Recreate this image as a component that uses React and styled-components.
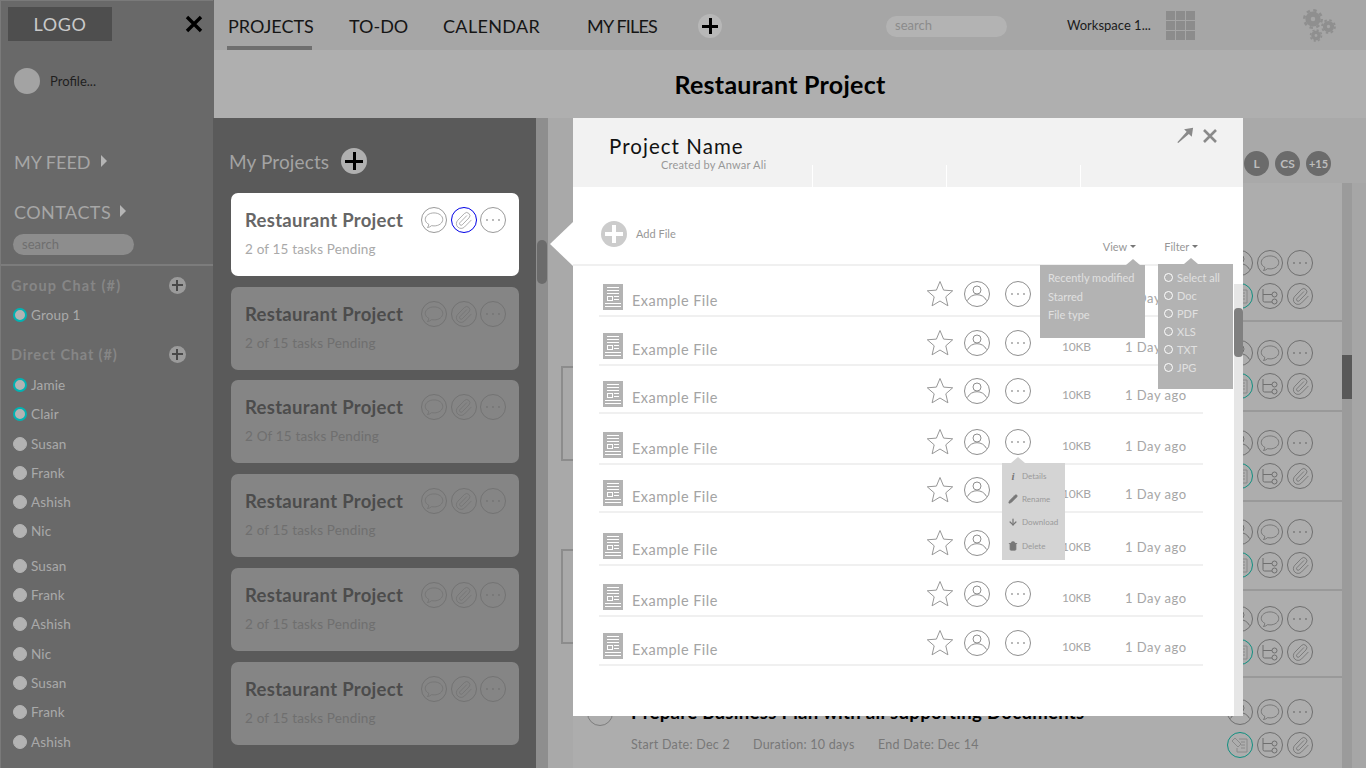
import React from "react";
import styled, { createGlobalStyle } from "styled-components";
import { Paperclip, Pencil, ArrowDown, Trash2 } from "lucide-react";

const Global = createGlobalStyle`
  html, body { margin: 0; padding: 0; height: 768px; overflow: hidden; background: #a9a9a9; }
  * { box-sizing: border-box; }
  body { font-family: Lato, "Open Sans", sans-serif; }
`;

const Page = styled.div`display: flex; width: 1366px; height: 768px; overflow: hidden;`;

/* ---------- sidebar ---------- */
const Sidebar = styled.aside`
  width: 213px; flex: none; background: #696969; border-left: 1px solid #7a7a7a; border-top: 1px solid #7a7a7a;
  display: flex; flex-direction: column;
`;
const LogoRow = styled.div`display: flex; align-items: center; justify-content: space-between; padding: 6px 10px 0 7px;`;
const Logo = styled.div`
  width: 104px; height: 34px; background: #4e4e4e; color: #c9c9c9; font-size: 18px; letter-spacing: .6px;
  display: flex; align-items: center; justify-content: center; margin-right: auto;
`;
const CloseGlyph = styled.svg`width: 18px; height: 18px; display: block;`;
const ProfileRow = styled.div`display: flex; align-items: center; gap: 10px; padding: 27px 0 0 13px;`;
const Avatar = styled.div`width: 26px; height: 26px; border-radius: 50%; background: #a3a3a3;`;
const ProfileName = styled.span`font-size: 13px; color: #1f1f1f;`;
const NavHead = styled.div`
  display: flex; align-items: center; gap: ${p => p.$gap}px; font-size: 18px; letter-spacing: ${p => p.$ls}px; color: #a6a6a6; height: 24px;
  margin: ${p => p.$top}px 0 0 13px;
`;
const Caret = styled.span`width: 0; height: 0; border-left: 6px solid #b5b5b5; border-top: 6px solid transparent; border-bottom: 6px solid transparent; margin-bottom: 2px;`;
const SideSearch = styled.div`
  width: 121px; height: 21px; margin: 10px 0 9px 12px; border-radius: 11px; background: #8d8d8d; color: #6f6f6f;
  font-size: 13px; padding: 1px 0 0 9px; line-height: 18px;
`;
const Rule = styled.div`height: 2px; background: #7c7c7c;`;
const GroupHead = styled.div`
  display: flex; align-items: center; justify-content: space-between; height: 20px; padding: 0 27px 0 10px;
  margin-top: ${p => p.$top}px; font-size: 14.5px; font-weight: 700; letter-spacing: ${p => p.$ls}px; color: #868686;
`;
const MiniPlus = styled.div`
  width: 17px; height: 17px; border-radius: 50%; background: #9b9b9b; position: relative;
  &::before, &::after { content: ""; position: absolute; background: #494949; }
  &::before { left: 3px; right: 3px; top: 7px; height: 2px; }
  &::after { top: 3px; bottom: 3px; left: 7px; width: 2px; }
`;
const Person = styled.div`
  display: flex; align-items: center; gap: 4px; height: 29.3px; padding-left: 12px; font-size: 13.5px; letter-spacing: .15px; color: #a9a9a9;
  margin-top: ${p => p.$gap || 0}px;
`;
const Dot = styled.span`
  width: 14px; height: 14px; border-radius: 50%; background: #b3b3b3; flex: none;
  border: ${p => p.$on ? "2px solid #00b3b3" : "1px solid #b3b3b3"};
`;

/* ---------- main ---------- */
const Main = styled.div`flex: 1; min-width: 0; display: flex; flex-direction: column; position: relative; background: #696969;`;
const TopBar = styled.header`height: 50px; flex: none; margin-left: 1px; background: #a6a6a6; display: flex; align-items: flex-start; padding-left: 13px;`;
const Tab = styled.div`
  height: 51px; width: ${p => p.$w}px; margin-right: ${p => p.$mr}px; font-size: 18px; color: #151515; padding: 15px 0 0 1px; letter-spacing: ${p => p.$ls || 0}px; line-height: 22px;
  border-bottom: ${p => p.$active ? "5px solid #6f6f6f" : "none"}; white-space: nowrap;
`;
const BigPlus = styled.div`
  width: ${p => p.$d}px; height: ${p => p.$d}px; border-radius: 50%; background: ${p => p.$bg}; position: relative; flex: none;
  margin-top: ${p => p.$mt || 0}px;
  &::before, &::after { content: ""; position: absolute; background: ${p => p.$fg}; }
  &::before { left: 4px; right: 4px; top: calc(50% - ${p => (p.$t || 3) / 2}px); height: ${p => p.$t || 3}px; }
  &::after { top: 4px; bottom: 4px; left: calc(50% - ${p => (p.$t || 3) / 2}px); width: ${p => p.$t || 3}px; }
`;
const TopSearch = styled.div`
  width: 121px; height: 21px; border-radius: 11px; background: #b3b3b3; color: #8b8b8b; font-size: 13px; line-height: 19px;
  padding-left: 9px; margin: 16px 0 0 164px;
`;
const Workspace = styled.div`font-size: 13px; color: #1c1c1c; margin: 17px 0 0 60px; width: 99px; white-space: nowrap;`;
const Waffle = styled.div`display: grid; grid-template-columns: repeat(3, 9px); grid-auto-rows: 9px; gap: 1px; margin-top: 11px; span { background: #8c8c8c; }`;
const GearBox = styled.svg`width: 33px; height: 33px; margin: 9px 0 0 108px; display: block; flex: none;`;
const TitleBar = styled.div`
  height: 68px; flex: none; margin-left: 1px; background: #afafaf; display: flex; align-items: center; justify-content: center;
  font-size: 25px; font-weight: 700; color: #000; padding-right: 20px; letter-spacing: .25px;
`;
const Body = styled.div`flex: 1; display: flex; min-height: 0; position: relative; background: #a9a9a9;`;

/* projects */
const Projects = styled.section`width: 323px; flex: none; background: #5a5a5a; padding: 29px 0 0 18px;`;
const ProjectsHead = styled.div`display: flex; align-items: center; gap: 12px; height: 28px; font-size: 19px; letter-spacing: .12px; color: #a3a3a3; margin-left: -2px;`;
const Cards = styled.div`display: flex; flex-direction: column; gap: 11px; margin-top: 18px;`;
const Card = styled.div`
  width: 288px; height: 83px; border-radius: 7px; background: ${p => p.$active ? "#fff" : "#858585"};
  padding: 14px 13px 0 14px; display: grid; grid-template-columns: 1fr auto; row-gap: 8px; align-content: start;
  &:nth-child(3) { margin-top: -1px; }
`;
const CardTitle = styled.div`font-size: 18.5px; font-weight: 700; letter-spacing: .3px; line-height: 26px; color: ${p => p.$active ? "#666" : "#4c4c4c"};`;
const CardIcons = styled.div`display: flex; gap: 3.5px;`;
const CardSub = styled.div`grid-column: 1 / 3; font-size: 13.5px; letter-spacing: .17px; line-height: 17px; color: ${p => p.$active ? "#a9a9a9" : "#6f6f6f"};`;
const Ring = styled.div`
  width: ${p => p.$d || 26}px; height: ${p => p.$d || 26}px; border-radius: 50%; flex: none; display: flex; align-items: center; justify-content: center;
  border: 1px solid ${p => p.$c}; color: ${p => p.$ic || p.$c};
  svg { display: block; }
`;
const Track = styled.div`width: 12px; flex: none; background: #8e8e8e; padding: 122px 1px 0;`;
const Thumb = styled.div`height: 44px; background: #6b6b6b; border-radius: 5px;`;
const Gutter = styled.div`width: 25px; flex: none; padding: 248px 0 0 13px; display: flex; flex-direction: column; gap: 88px;`;
const GutterBox = styled.div`height: 95px; border: 2px solid #8c8c8c; border-right: none;`;

/* tasks behind modal */
const Tasks = styled.div`flex: 1; min-width: 0; display: flex; flex-direction: column; padding-top: 33px;`;
const Team = styled.div`display: flex; justify-content: flex-end; gap: 6px; height: 32px; padding-right: 35px;`;
const Badge = styled.div`
  width: 25px; height: 25px; border-radius: 50%; background: #6b6b6b; color: #bdbdbd; font-weight: 700; font-size: ${p => p.$s || 12}px;
  display: flex; align-items: center; justify-content: center;
`;
const TaskWrap = styled.div`flex: 1; display: flex; min-height: 0;`;
const TaskList = styled.div`flex: 1; min-width: 0; background: #adadad; display: flex; flex-direction: column;`;
const TaskRow = styled.div`
  height: ${p => p.$h}px; flex: none; border-bottom: ${p => p.$last ? "none" : "2px solid #999"};
  display: flex; justify-content: flex-end; align-items: flex-end; padding: 0 29px ${p => p.$last ? 10 : 11}px ${p => p.$last ? 14 : 0}px;
`;
const TaskIcons = styled.div`display: grid; grid-template-columns: repeat(3, 26px); gap: 7px 4px;`;
const TaskText = styled.div`margin-right: auto; align-self: stretch; display: grid; grid-template-columns: 26px 1fr; column-gap: 18px; align-content: start; padding-top: 22px;`;
const CheckCircle = styled.div`width: 26px; height: 26px; border-radius: 50%; border: 1px solid #7d7d7d;`;
const TaskTitle = styled.div`font-size: 18.6px; font-weight: 700; color: #000; line-height: 24px; white-space: nowrap; letter-spacing: .27px;`;
const Meta = styled.div`grid-column: 2; display: flex; margin-top: 11px; font-size: 12.5px; color: #787878; letter-spacing: .25px; white-space: nowrap;`;
const MetaItem = styled.span`width: ${p => p.$w}px;`;
const ListScroll = styled.div`width: 10px; flex: none; background: #9b9b9b; padding-top: 172px;`;
const ListThumb = styled.div`height: 44px; background: #585858;`;
const Edge = styled.div`width: 14px; flex: none; background: #a6a6a6;`;

/* modal */
const Modal = styled.div`
  position: absolute; left: 360px; top: 0; width: 670px; height: 598px; background: #fff; display: flex; flex-direction: column; z-index: 2;
`;
const Pointer = styled.div`
  position: absolute; left: -23px; top: 104px; width: 0; height: 0;
  border-right: 23px solid #fff; border-top: 22px solid transparent; border-bottom: 22px solid transparent;
`;
const ModalHead = styled.div`height: 69px; flex: none; background: #f2f2f2; padding: 16px 25px 0 36px; position: relative; display: flex; justify-content: space-between;`;
const ModalTitle = styled.div`font-size: 20.5px; color: #111; line-height: 25px; letter-spacing: 1.05px;`;
const ModalBy = styled.div`font-size: 11px; color: #989898; line-height: 12px; margin: 0 0 0 52px; letter-spacing: .2px;`;
const HeadActions = styled.div`display: flex; align-items: flex-start; gap: 8px; color: #8a8a8a; margin-top: -8px;`;
const Ticks = styled.div`position: absolute; left: 239px; bottom: 0; display: flex; gap: 133px; span { width: 1px; height: 22px; background: #fff; }`;
const ToolRow = styled.div`height: 79px; flex: none; display: flex; align-items: flex-start; padding: 34px 0 0 28px; border-bottom: 2px solid #f0f0f0; margin-right: 10px;`;
const AddText = styled.span`font-size: 11px; color: #979797; margin: 6px 0 0 9px;`;
const ToolLink = styled.div`font-size: 11px; color: #979797; display: flex; align-items: center; gap: 3px; margin-top: 19px; margin-left: ${p => p.$ml}px;`;
const TinyCaret = styled.span`width: 0; height: 0; border-top: 3px solid #777; border-left: 3px solid transparent; border-right: 3px solid transparent;`;
const Files = styled.div`padding: 0 0 0 26px;`;
const FileRow = styled.div`
  width: 604px; height: ${p => p.$h}px; border-bottom: 2px solid #f0f0f0; display: flex; align-items: flex-end; padding-bottom: 5px;
`;
const DocIcon = styled.svg`width: 20px; height: 26px; margin-left: 4px; flex: none; display: block;`;
const FileName = styled.div`font-size: 14.5px; letter-spacing: .45px; color: #a4a4a4; margin-left: 9px; width: 294px; line-height: 18px;`;
const StarGlyph = styled.svg`width: 28px; height: 28px; flex: none; margin-bottom: 2px; display: block;`;
const FileRing = styled(Ring)`margin-left: ${p => p.$ml}px; margin-bottom: 3px;`;
const Size = styled.div`font-size: 12px; color: #a6a6a6; width: 63px; margin-left: 31px; margin-bottom: 5px; letter-spacing: -.2px;`;
const Ago = styled.div`font-size: 13px; color: #a6a6a6; letter-spacing: .5px; margin-bottom: 4px; white-space: nowrap;`;
const ModalTrack = styled.div`position: absolute; right: 0; top: 166px; bottom: 0; width: 9px; background: #e6e6e6; padding-top: 24px;`;
const ModalThumb = styled.div`height: 49px; background: #808080; border-radius: 4px;`;
const Drop = styled.div`
  position: absolute; background: ${p => p.$bg || "#b3b3b3"}; left: ${p => p.$l}px; top: ${p => p.$t}px; width: ${p => p.$w}px; height: ${p => p.$h}px;
  display: flex; flex-direction: column;
  &::before { content: ""; position: absolute; top: -6px; left: ${p => p.$n}px; border-bottom: 6px solid ${p => p.$bg || "#b3b3b3"}; border-left: 7px solid transparent; border-right: 7px solid transparent; }
`;
const ViewItem = styled.div`font-size: 11px; color: #e0e0e0; line-height: 18.5px;`;
const ViewList = styled(Drop)`padding: 4px 0 0 8px;`;
const FilterList = styled(Drop)`padding: 4px 0 0 6px;`;
const FilterItem = styled.div`display: flex; align-items: center; gap: 4px; font-size: 11px; color: #e0e0e0; height: 18px;`;
const Radio = styled.span`width: 9px; height: 9px; border-radius: 50%; border: 1px solid #fff; flex: none;`;
const MenuList = styled(Drop)`padding: 1px 0 0 6px;`;
const MenuItem = styled.div`display: flex; align-items: center; gap: 4px; height: 23.3px; font-size: 8px; color: #9a9a9a; svg { flex: none; color: #777; }`;
const InfoMark = styled.span`width: 10px; text-align: center; font: italic 700 11px "Liberation Serif", serif; color: #777;`;

const Bubble = ({ s = 20 }) => (
  <svg width={s} height={s} viewBox="0 0 24 24" fill="none" stroke="currentColor" strokeWidth="1">
    <path d="M12 3.500c5.800 0 10.500 3.300 10.500 7.800s-4.700 7.800-10.500 7.800c-1 0-2-.1-2.900-.3-1.300 1.300-3 2-5 2.200 1-1.100 1.600-2.300 1.700-3.800C3 15.800 1.500 13.700 1.500 11.300 1.500 6.800 6.200 3.500 12 3.500Z" />
  </svg>
);
const Clip = ({ s = 19 }) => <Paperclip size={s} strokeWidth={1} />;
const Dots = () => (
  <svg width="16" height="4" viewBox="0 0 16 4" fill="currentColor">
    <circle cx="2" cy="2" r=".9" /><circle cx="8" cy="2" r=".9" /><circle cx="14" cy="2" r=".9" />
  </svg>
);
const UserGlyph = ({ s = 24 }) => (
  <svg width={s} height={s} viewBox="0 0 24 24" fill="none" stroke="currentColor" strokeWidth="1">
    <circle cx="12" cy="8" r="4" />
    <path d="M2.500 18.500c1.800-3.800 5.400-5.800 9.500-5.800s7.700 2 9.500 5.800" />
  </svg>
);
const Tree = () => (
  <svg width="20" height="20" viewBox="0 0 20 20" fill="none" stroke="currentColor" strokeWidth="1">
    <path d="M3 3v11.500a1.500 1.500 0 0 0 1.500 1.500H12M3 8.500h9" />
    <circle cx="14.500" cy="8.500" r="2.500" /><circle cx="14.500" cy="15.500" r="2.500" />
  </svg>
);
const TaskGlyph = () => (
  <svg width="20" height="20" viewBox="0 0 20 20" fill="none" stroke="#8a8a8a" strokeWidth="1">
    <path d="M9 4h8v13H7v-4" /><path d="M11 7h4M11 10h4M11 13h4" />
    <path d="M2 6l3-3 6 6-3 3-6-6Z" />
  </svg>
);
const Gear = ({ x, y, r }) => {
  const tooth = (2 * Math.PI * (r * 0.92)) / 16;
  return (
    <g fill="none" stroke="#8f8f8f">
      <circle cx={x} cy={y} r={r * 0.52} strokeWidth={r * 0.56} />
      <circle cx={x} cy={y} r={r * 0.92} strokeWidth={r * 0.26} strokeDasharray={`${tooth} ${tooth}`} />
    </g>
  );
};
const Doc = () => (
  <DocIcon viewBox="0 0 20 26">
    <rect width="20" height="26" fill="#b3b3b3" />
    <g fill="#fff">
      <rect x="4" y="3" width="12" height="1" /><rect x="4" y="6" width="12" height="1" /><rect x="4" y="9" width="12" height="1" />
      <rect x="4.500" y="12.500" width="5" height="4" fill="none" stroke="#fff" /><rect x="11" y="12" width="5" height="1" /><rect x="11" y="15" width="5" height="1" />
      <rect x="2" y="19" width="16" height="1" /><rect x="2" y="22" width="16" height="1" />
    </g>
  </DocIcon>
);

const people = [
  ["Jamie", 1], ["Clair", 1], ["Susan"], ["Frank"], ["Ashish"], ["Nic"],
  ["Susan", 0, 5], ["Frank"], ["Ashish"], ["Nic"], ["Susan"], ["Frank"], ["Ashish"],
];
const cards = [
  { sub: "2 of 15 tasks Pending", active: true }, { sub: "2 of 15 tasks Pending" }, { sub: "2 Of 15 tasks Pending" },
  { sub: "2 of 15 tasks Pending" }, { sub: "2 of 15 tasks Pending" }, { sub: "2 of 15 tasks Pending" },
];
const fileHeights = [51, 49, 48, 51, 48, 53, 51, 49];
const taskHeights = [139, 90, 90, 89, 87];

const TaskIconSet = () => (
  <TaskIcons>
    <Ring $c="#6f6f6f"><UserGlyph /></Ring>
    <Ring $c="#6f6f6f"><Bubble /></Ring>
    <Ring $c="#6f6f6f" $ic="#777"><Dots /></Ring>
    <Ring $c="#0f8f80"><TaskGlyph /></Ring>
    <Ring $c="#6f6f6f"><Tree /></Ring>
    <Ring $c="#6f6f6f"><Clip /></Ring>
  </TaskIcons>
);

export default function App() {
  return (
    <Page>
      <Global />
      <Sidebar>
        <LogoRow>
          <Logo>LOGO</Logo>
          <CloseGlyph viewBox="0 0 18 18"><path d="M2 2l14 14M16 2 2 16" stroke="#000" strokeWidth="3.400" /></CloseGlyph>
        </LogoRow>
        <ProfileRow><Avatar /><ProfileName>Profile...</ProfileName></ProfileRow>
        <NavHead $top={56} $ls={0} $gap={10}>MY FEED<Caret /></NavHead>
        <NavHead $top={26} $ls={.45} $gap={9}>CONTACTS<Caret /></NavHead>
        <SideSearch>search</SideSearch>
        <Rule />
        <GroupHead $top={9} $ls={1.15}>Group Chat (#)<MiniPlus /></GroupHead>
        <Person style={{ marginTop: 5 }}><Dot $on />Group 1</Person>
        <GroupHead $top={15} $ls={.85}>Direct Chat (#)<MiniPlus /></GroupHead>
        {people.map(([n, on, gap], i) => (
          <Person key={i} $gap={i === 0 ? 6 : gap}><Dot $on={!!on} />{n}</Person>
        ))}
      </Sidebar>
      <Main>
        <TopBar>
          <Tab $active $w={85} $mr={36}>PROJECTS</Tab>
          <Tab $w={57} $mr={37}>TO-DO</Tab>
          <Tab $w={100} $mr={44} $ls={.35}>CALENDAR</Tab>
          <Tab $w={72} $mr={40} $ls={-.8}>MY FILES</Tab>
          <BigPlus $d={24} $bg="#b7b7b7" $fg="#000" $mt={14} />
          <TopSearch>search</TopSearch>
          <Workspace>Workspace 1...</Workspace>
          <Waffle>{Array.from({ length: 9 }, (_, i) => <span key={i} />)}</Waffle>
          <GearBox viewBox="0 0 33 33">
            <Gear x={10} y={10} r={9.500} />
            <Gear x={25.500} y={17.500} r={7} />
            <Gear x={13} y={26.500} r={6} />
          </GearBox>
        </TopBar>
        <TitleBar>Restaurant Project</TitleBar>
        <Body>
          <Projects>
            <ProjectsHead>My Projects<BigPlus $d={26} $bg="#b0b0b0" $fg="#000" /></ProjectsHead>
            <Cards>
              {cards.map((c, i) => {
                const ring = c.active ? "#9a9a9a" : "#737373";
                return (
                  <Card key={i} $active={c.active}>
                    <CardTitle $active={c.active}>Restaurant Project</CardTitle>
                    <CardIcons>
                      <Ring $c={ring}><Bubble /></Ring>
                      <Ring $c={c.active ? "#0000e6" : ring} $ic={ring}><Clip /></Ring>
                      <Ring $c={ring}><Dots /></Ring>
                    </CardIcons>
                    <CardSub $active={c.active}>{c.sub}</CardSub>
                  </Card>
                );
              })}
            </Cards>
          </Projects>
          <Track><Thumb /></Track>
          <Gutter><GutterBox /><GutterBox /></Gutter>
          <Tasks>
            <Team><Badge>L</Badge><Badge>CS</Badge><Badge $s={11}>+15</Badge></Team>
            <TaskWrap>
              <TaskList>
                {taskHeights.map((h, i) => <TaskRow key={i} $h={h}><TaskIconSet /></TaskRow>)}
                <TaskRow $h={90} $last>
                  <TaskText>
                    <CheckCircle />
                    <TaskTitle>Prepare Business Plan with all supporting Documents</TaskTitle>
                    <Meta>
                      <MetaItem $w={122}>Start Date: Dec 2</MetaItem>
                      <MetaItem $w={125}>Duration: 10 days</MetaItem>
                      <MetaItem>End Date: Dec 14</MetaItem>
                    </Meta>
                  </TaskText>
                  <TaskIconSet />
                </TaskRow>
              </TaskList>
              <ListScroll><ListThumb /></ListScroll>
              <Edge />
            </TaskWrap>
          </Tasks>

          <Modal>
            <Pointer />
            <ModalHead>
              <div>
                <ModalTitle>Project Name</ModalTitle>
                <ModalBy>Created by Anwar Ali</ModalBy>
              </div>
              <HeadActions>
                <svg width="18" height="18" viewBox="0 0 20 20" fill="#8a8a8a">
                  <path d="M9 3.500 19 2l-1.500 10-3.200-3.200L2.500 19 1.500 18 11.800 6.300Z" />
                </svg>
                <svg width="16" height="20" viewBox="0 0 16 20"><path d="M2 4l12 12M14 4 2 16" stroke="#8a8a8a" strokeWidth="2.600" /></svg>
              </HeadActions>
              <Ticks><span /><span /><span /></Ticks>
            </ModalHead>
            <ToolRow>
              <BigPlus $d={26} $bg="#cccccc" $fg="#fff" $t={4} />
              <AddText>Add File</AddText>
              <ToolLink $ml={427}>View<TinyCaret /></ToolLink>
              <ToolLink $ml={28}>Filter<TinyCaret /></ToolLink>
            </ToolRow>
            <Files>
              {fileHeights.map((h, i) => (
                <FileRow key={i} $h={h}>
                  <Doc />
                  <FileName>Example File</FileName>
                  <StarGlyph viewBox="0 0 28 28">
                    <path d="M14 1.500l3.600 8.600 9.100.7-6.900 6 2.100 9-7.900-4.800-7.900 4.800 2.100-9-6.900-6 9.100-.7Z" fill="none" stroke="#979797" strokeWidth="1" />
                  </StarGlyph>
                  <FileRing $c="#8f8f8f" $ml={10}><UserGlyph /></FileRing>
                  <FileRing $c="#8f8f8f" $ml={15} $ic="#999"><Dots /></FileRing>
                  <Size>10KB</Size>
                  <Ago>1 Day ago</Ago>
                </FileRow>
              ))}
            </Files>
            <ModalTrack><ModalThumb /></ModalTrack>
            <ViewList $l={467} $t={147} $w={105} $h={73} $n={86}>
              <ViewItem>Recently modified</ViewItem>
              <ViewItem>Starred</ViewItem>
              <ViewItem>File type</ViewItem>
            </ViewList>
            <FilterList $l={585} $t={146} $w={75} $h={125} $n={26}>
              {["Select all", "Doc", "PDF", "XLS", "TXT", "JPG"].map(f => (
                <FilterItem key={f}><Radio />{f}</FilterItem>
              ))}
            </FilterList>
            <MenuList $l={429} $t={345} $w={63} $h={97} $n={9} $bg="#d4d4d4">
              <MenuItem><InfoMark>i</InfoMark>Details</MenuItem>
              <MenuItem><Pencil size={10} fill="#777" />Rename</MenuItem>
              <MenuItem><ArrowDown size={10} strokeWidth={3} />Download</MenuItem>
              <MenuItem><Trash2 size={10} fill="#777" />Delete</MenuItem>
            </MenuList>
          </Modal>
        </Body>
      </Main>
    </Page>
  );
}
